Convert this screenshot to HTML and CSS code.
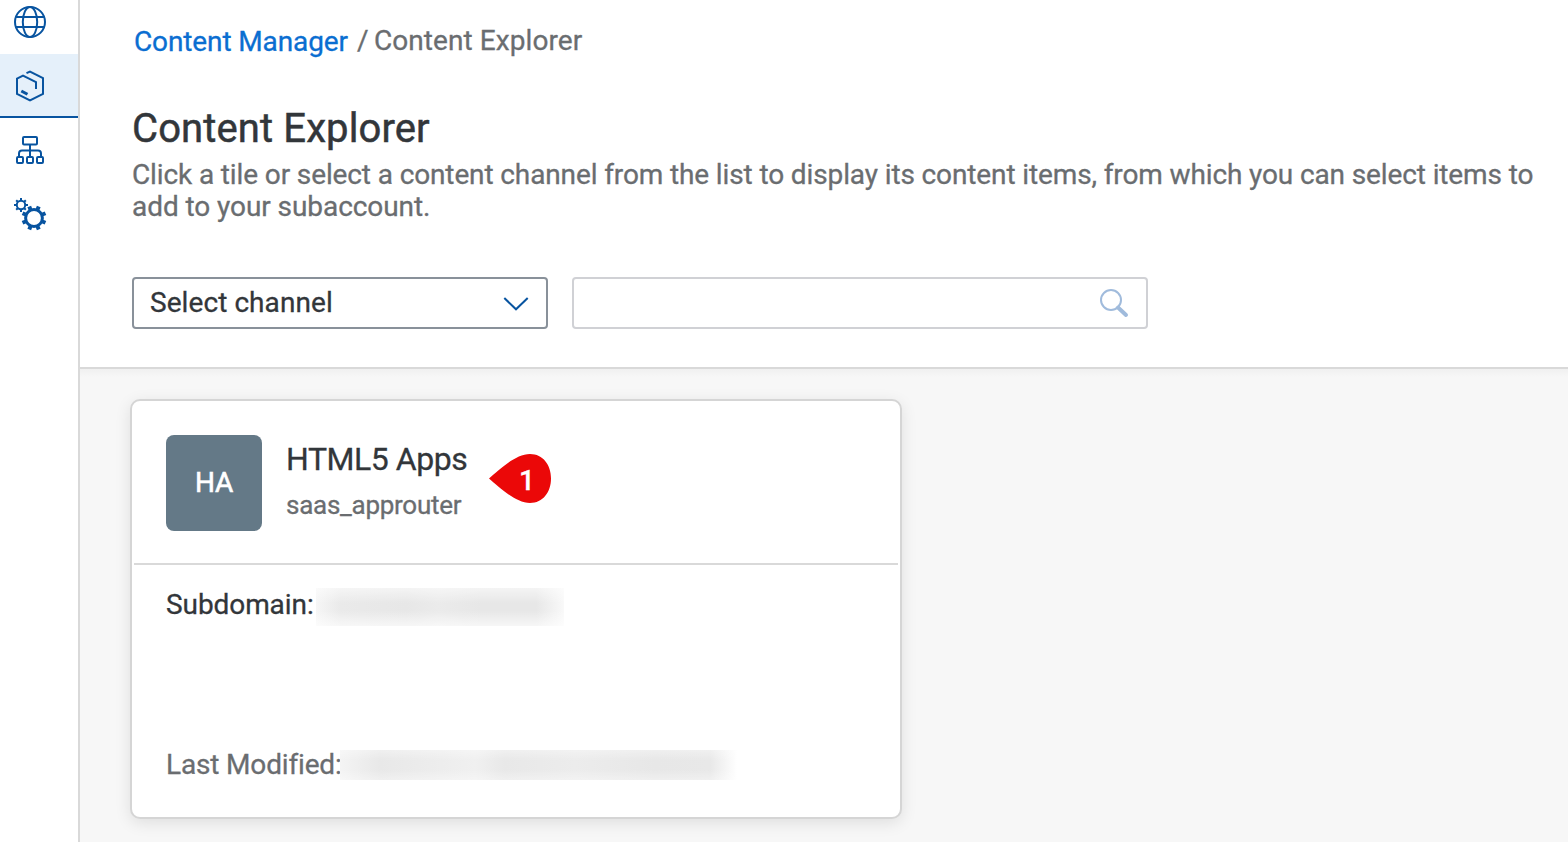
FILE: index.html
```html
<!DOCTYPE html>
<html lang="en">
<head>
<meta charset="utf-8">
<title>Content Explorer</title>
<link rel="stylesheet" href="styles.css">
</head>
<body>
<div class="app">
  <nav class="sidebar">
    <a class="nav-item nav-first"><svg width="36" height="36" viewBox="0 0 36 36"><circle cx="18" cy="18" r="15"/><ellipse cx="18" cy="18" rx="7.2" ry="15"/><path d="M4 13H32M4 23H32"/></svg></a>
    <a class="nav-item active"><svg width="36" height="36" viewBox="0 0 36 36"><path d="M14.500 5.200 18 3.500 31 10.200V26L18 32.500 5 26V10.700L11 7.700 24 14.200V21"/><path class="thick" d="M9.300 23 15.500 26.300"/></svg></a>
    <a class="nav-item"><svg width="36" height="36" viewBox="0 0 36 36"><rect x="11" y="5" width="14" height="7.500" rx="1"/><path d="M18 12.500V24M7 24V21.500Q7 18.500 10 18.500H26Q29 18.500 29 21.500V24"/><rect x="5" y="25" width="6" height="6" rx="1"/><rect x="15" y="25" width="6" height="6" rx="1"/><rect x="25" y="25" width="6" height="6" rx="1"/></svg></a>
    <a class="nav-item"><svg width="36" height="36" viewBox="0 0 36 36">
      <circle cx="9" cy="9" r="4.200"/>
      <path d="M9 2V4.500M9 13.500V16M2 9H4.500M13.500 9H16M4.200 4.200 6 6M12 12 13.800 13.800M4.200 13.800 6 12M12 6 13.800 4.200"/>
      <circle class="ring" cx="22" cy="22" r="8.400"/>
      <g class="teeth" transform="rotate(22.500 22 22)"><path d="M22 9.600V13.500M22 30.500V34.400M9.600 22H13.500M30.500 22H34.400M13.200 13.200 16 16M28 28 30.800 30.800M13.200 30.800 16 28M28 16 30.800 13.200"/></g>
    </svg></a>
  </nav>
  <main class="main">
    <header class="header">
      <div class="breadcrumb"><a class="crumb-link">Content Manager</a><span class="slash">/</span><span class="crumb">Content Explorer</span></div>
      <h1 class="title">Content Explorer</h1>
      <p class="description"><span class="line-one">Click a tile or select a content channel from the list to display its content items, from which you can select items to</span><br><span class="line-two">add to your subaccount.</span></p>
      <div class="filters">
        <div class="select"><span class="select-label">Select channel</span><svg width="28" height="18" viewBox="0 0 28 18"><path d="M2.300 4 14 15.300 25.700 4"/></svg></div>
        <div class="search"><svg width="32" height="32" viewBox="0 0 32 32"><circle cx="13" cy="13" r="10"/><path d="M20 20.500 28 28"/></svg></div>
      </div>
    </header>
    <section class="content">
      <article class="card">
        <div class="card-head">
          <div class="avatar">HA</div>
          <div class="card-names"><div class="card-title">HTML5 Apps</div><div class="card-subtitle">saas_approuter</div></div>
          <div class="marker"><svg width="62" height="50" viewBox="0 0 62 50"><path d="M0 24.500C9 17 26 0 41 0C54 0 62 11 62 24.500S54 49 41 49C26 49 9 32 0 24.500Z"/></svg><span class="marker-number">1</span></div>
        </div>
        <div class="card-body">
          <div class="row"><span class="label-sub">Subdomain:</span><span class="redacted sub"></span></div>
          <div class="row modified"><span class="label-mod">Last Modified:</span><span class="redacted mod"></span></div>
        </div>
      </article>
    </section>
  </main>
</div>
</body>
</html>
```
FILE: styles.css
```css
* { box-sizing: border-box; }
body { margin: 0; font-family: Roboto, "Liberation Sans", sans-serif; font-size: 28px; color: #32363a; background: #fff; -webkit-text-stroke: .3px currentColor; }
.app { display: flex; width: 1568px; height: 842px; overflow: hidden; }
.sidebar { width: 80px; flex: none; border-right: 2px solid #d9d9d9; }
.nav-item { display: flex; align-items: center; height: 64px; padding-left: 12px; }
.nav-first { height: 54px; padding-bottom: 10px; }
.active { background: #e5f0fa; border-bottom: 2px solid #0854a0; padding-top: 1px; }
.sidebar svg { fill: none; stroke: #0854a0; stroke-width: 2; }
.sidebar .thick { stroke-width: 3; }
.sidebar .ring { stroke-width: 3; }
.sidebar .teeth { stroke-width: 4; }
.main { flex: 1; display: flex; flex-direction: column; min-width: 0; }
.header { height: 369px; padding: 24px 0 0 52px; border-bottom: 2px solid #d9d9d9; flex: none; }
.breadcrumb { display: flex; height: 34px; line-height: 34px; padding-left: 2px; color: #6a6d70; white-space: nowrap; }
.crumb-link { color: #0a6ed1; width: 223px; padding-top: 1px; letter-spacing: -.12px; }
.slash { width: 17px; }
.crumb { letter-spacing: .07px; }
.title { margin: 47px 0 0; font-size: 40px; line-height: 48px; font-weight: 400; letter-spacing: .12px; -webkit-text-stroke-width: .5px; }
.description { margin: 6px 0 0; line-height: 32px; color: #6a6d70; white-space: nowrap; }
.line-one { letter-spacing: -.122px; }
.line-two { letter-spacing: -.07px; }
.filters { display: flex; gap: 24px; margin-top: 54px; }
.select { display: flex; align-items: center; justify-content: space-between; width: 416px; height: 52px; padding: 0 16px; border: 2px solid #89919a; border-radius: 4px; }
.select-label { padding-bottom: 2px; letter-spacing: .07px; }
.select svg { fill: none; stroke: #0854a0; stroke-width: 2; }
.search { display: flex; align-items: center; justify-content: flex-end; width: 576px; height: 52px; padding-right: 16px; border: 2px solid #d0d1d5; border-radius: 4px; }
.search svg { fill: none; stroke: #a0bbdc; stroke-width: 2; }
.search path { stroke-width: 4; stroke-linecap: round; }
.content { flex: 1; padding: 30px 0 0 50px; background: linear-gradient(#f0f0f0, #f7f7f7 8px); }
.card { width: 772px; height: 420px; border: 2px solid #d5d5d5; border-radius: 10px; background: #fff; box-shadow: 0 4px 16px rgba(0,0,0,.1); }
.card-head { display: flex; height: 164px; margin: 0 2px; padding: 34px 0 0 32px; border-bottom: 2px solid #d9d9d9; }
.avatar { width: 96px; height: 96px; line-height: 96px; border-radius: 8px; background: #647987; color: #fff; text-align: center; font-size: 28px; letter-spacing: -.3px; -webkit-text-stroke-width: .6px; }
.card-names { width: 203px; margin-left: 24px; white-space: nowrap; }
.card-title { font-size: 32px; line-height: 40px; margin-top: 4px; letter-spacing: -.45px; }
.card-subtitle { font-size: 26px; line-height: 36px; margin-top: 8px; color: #6a6d70; letter-spacing: -.27px; }
.marker { display: grid; width: 62px; height: 50px; margin-top: 19px; }
.marker > * { grid-area: 1 / 1; }
.marker path { fill: #eb0808; stroke: none; }
.marker-number { color: #fff; font-weight: 500; line-height: 53px; padding-left: 30px; }
.card-body { padding: 23px 0 0 34px; }
.row { display: flex; align-items: center; height: 38px; white-space: nowrap; }
.modified { margin-top: 120px; color: #6a6d70; }
.label-sub { width: 150px; padding-bottom: 5px; letter-spacing: -.08px; }
.label-mod { width: 174px; padding-bottom: 2px; letter-spacing: -.16px; }
.redacted { background: #f2f2f2; }
.sub { width: 248px; height: 38px; background: linear-gradient(rgba(255,255,255,.55), transparent 40%, transparent 60%, rgba(255,255,255,.65)), linear-gradient(90deg, #f6f6f6, #eaeaea 24px, #e7e7e7 90px, #ebebeb 122px, #e7e7e7 165px, #e7e7e7 220px, #f9f9f9); }
.mod { width: 400px; height: 30px; background: linear-gradient(rgba(255,255,255,.35), transparent 35%, transparent 65%, rgba(255,255,255,.35)), linear-gradient(90deg, #f4f4f4, #e8e8e8 40px, #ececec 90px, #f0f0f0 135px, #e8e8e8 165px, #ececec 235px, #e7e7e7 315px, #e8e8e8 370px, #fff 397px); }
```
